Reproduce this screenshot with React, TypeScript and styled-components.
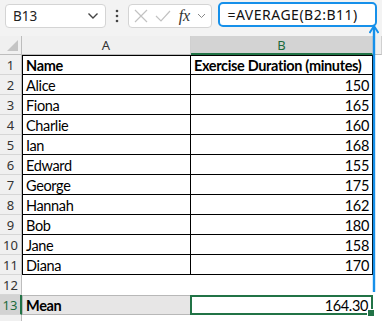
import React from "react";
import styled, { createGlobalStyle } from "styled-components";

const GlobalStyle = createGlobalStyle`
  html, body {
    margin: 0;
    padding: 0;
    background: #f3f3f3;
  }
`;

const Page = styled.div`
  position: relative;
  width: 382px;
  height: 321px;
  overflow: hidden;
  background: #f3f3f3;
`;

const Toolbar = styled.div`
  display: flex;
  align-items: center;
  height: 36px;
  padding: 0 5px;
  box-sizing: border-box;
`;

const NameBox = styled.div`
  display: flex;
  align-items: center;
  justify-content: space-between;
  width: 101px;
  height: 24px;
  margin-top: -4px;
  box-sizing: border-box;
  padding: 0 6px 0 7px;
  background: #fff;
  border: 1px solid #d4d4d4;
  border-radius: 4px;
  font-family: "Noto Sans", "Open Sans", sans-serif;
  font-size: 13.5px;
  color: #222;
`;

const Dots = styled.div`
  width: 22px;
  display: flex;
  justify-content: center;
  margin-top: -4px;
`;

const FuncBox = styled.div`
  display: flex;
  align-items: center;
  gap: 7px;
  width: 85px;
  height: 24px;
  margin-top: -4px;
  box-sizing: border-box;
  padding: 0 4px 0 5px;
  background: #fff;
  border: 1px solid #d4d4d4;
  border-radius: 4px;
`;

const Fx = styled.span`
  font-family: "Liberation Serif", serif;
  font-style: italic;
  font-size: 16px;
  color: #333;
  margin-left: 1px;
`;

const FormulaBox = styled.div`
  display: flex;
  align-items: center;
  margin-left: 6px;
  width: 159px;
  height: 25px;
  margin-top: -7px;
  box-sizing: border-box;
  padding-left: 7px;
  background: #fff;
  border: 2px solid #1690ea;
  border-radius: 5px;
  font-family: "Noto Sans", "Open Sans", sans-serif;
  font-size: 14px;
  letter-spacing: 0.5px;
  color: #111;
  white-space: pre;
`;

const Sheet = styled.div`
  display: grid;
  grid-template-columns: 22px 169px 182px 9px;
  grid-template-rows: 19px repeat(14, 20px);
  background: #fff;
`;

const Corner = styled.div`
  position: relative;
  background: #f0f0f0;
  border-right: 1px solid #bdbdbd;
  border-bottom: 1px solid #bdbdbd;
  box-sizing: border-box;
`;

const CornerTri = styled.div`
  position: absolute;
  right: 3px;
  bottom: 3px;
  width: 0;
  height: 0;
  border-left: 11px solid transparent;
  border-bottom: 11px solid #c4c4c4;
`;

const ColHead = styled.div<{ $active?: boolean }>`
  display: flex;
  align-items: center;
  justify-content: center;
  box-sizing: border-box;
  background: ${(p) => (p.$active ? "#d3d3d3" : "#f0f0f0")};
  border-right: 1px solid #d0d0d0;
  border-bottom: ${(p) => (p.$active ? "2px solid #217346" : "1px solid #bdbdbd")};
  padding-top: ${(p) => (p.$active ? "1px" : "0")};
  font-family: "Noto Sans", "Open Sans", sans-serif;
  font-size: 13px;
  color: ${(p) => (p.$active ? "#1d6b3c" : "#333")};
`;

const RowHead = styled.div<{ $active?: boolean }>`
  display: flex;
  align-items: center;
  justify-content: center;
  box-sizing: border-box;
  background: ${(p) => (p.$active ? "#d3d3d3" : "#f0f0f0")};
  border-right: ${(p) => (p.$active ? "2px solid #217346" : "1px solid #bdbdbd")};
  border-bottom: 1px solid #d6d6d6;
  font-family: "Noto Sans", "Open Sans", sans-serif;
  font-size: 13px;
  color: ${(p) => (p.$active ? "#1d6b3c" : "#333")};
`;

const Cell = styled.div<{ $num?: boolean; $bold?: boolean; $boxed?: boolean; $fill?: string }>`
  display: flex;
  align-items: center;
  justify-content: ${(p) => (p.$num ? "flex-end" : "flex-start")};
  box-sizing: border-box;
  padding: 1px 3px 0 3px;
  background: ${(p) => p.$fill || "#fff"};
  border-right: 1px solid ${(p) => (p.$boxed ? "#000" : "transparent")};
  border-bottom: 1px solid ${(p) => (p.$boxed ? "#000" : "transparent")};
  font-family: "Lato", "Liberation Sans", sans-serif;
  font-size: 14.5px;
  letter-spacing: -0.35px;
  font-weight: ${(p) => (p.$bold ? 700 : 400)};
  color: #000;
  white-space: nowrap;
`;

const LeftEdge = styled(Cell)`
  border-left: 1px solid #000;
`;

const TopRow = styled(Cell)`
  border-top: 1px solid #000;
`;

const MeanCell = styled(Cell)`
  border-top: 1px solid #b8b8b8;
  border-left: 1px solid #b8b8b8;
  border-bottom: 1px solid #b8b8b8;
`;

const SelCell = styled.div`
  position: relative;
  display: flex;
  align-items: center;
  justify-content: flex-end;
  box-sizing: border-box;
  padding: 1px 3px 0 3px;
  background: #fff;
  border: 2px solid #217346;
  margin-left: -1px;
  font-family: "Lato", "Liberation Sans", sans-serif;
  font-size: 14.5px;
  letter-spacing: -0.35px;
  color: #000;
`;

const Handle = styled.div`
  position: absolute;
  right: -4px;
  bottom: -4px;
  width: 6px;
  height: 6px;
  background: #217346;
  border: 1px solid #fff;
`;

const Spare = styled.div`
  background: #fff;
`;

const Arrow = styled.svg`
  position: absolute;
  left: 369px;
  top: 24px;
`;

const data: [string, number][] = [
  ["Alice", 150],
  ["Fiona", 165],
  ["Charlie", 160],
  ["Ian", 168],
  ["Edward", 155],
  ["George", 175],
  ["Hannah", 162],
  ["Bob", 180],
  ["Jane", 158],
  ["Diana", 170],
];

const App: React.FC = () => {
  return (
    <Page>
      <GlobalStyle />
      <Toolbar>
        <NameBox>
          <span>B13</span>
          <svg width="12" height="8" viewBox="0 0 12 8">
            <path d="M1.5 1.5 L6 6 L10.5 1.5" fill="none" stroke="#444" strokeWidth="1.4" />
          </svg>
        </NameBox>
        <Dots>
          <svg width="4" height="14" viewBox="0 0 4 14">
            <circle cx="2" cy="2" r="1.3" fill="#444" />
            <circle cx="2" cy="7" r="1.3" fill="#444" />
            <circle cx="2" cy="12" r="1.3" fill="#444" />
          </svg>
        </Dots>
        <FuncBox>
          <svg width="14" height="14" viewBox="0 0 14 14">
            <path d="M1 1 L13 13 M13 1 L1 13" stroke="#c2c2c2" strokeWidth="1.2" />
          </svg>
          <svg width="16" height="14" viewBox="0 0 16 14">
            <path d="M1 7 L6 12 L15 2" fill="none" stroke="#c2c2c2" strokeWidth="1.2" />
          </svg>
          <Fx>fx</Fx>
          <svg width="9" height="6" viewBox="0 0 9 6">
            <path d="M1 1 L4.5 4.5 L8 1" fill="none" stroke="#888" strokeWidth="1" />
          </svg>
        </FuncBox>
        <FormulaBox>=AVERAGE(B2:B11)</FormulaBox>
      </Toolbar>
      <Sheet>
        <Corner>
          <CornerTri />
        </Corner>
        <ColHead>A</ColHead>
        <ColHead $active>B</ColHead>
        <ColHead />

        <RowHead>1</RowHead>
        <TopRow $boxed $bold style={{ borderLeft: "1px solid #000" }}>Name</TopRow>
        <TopRow $boxed $bold>Exercise Duration (minutes)</TopRow>
        <Spare />

        {data.map(([name, mins], i) => (
          <React.Fragment key={name}>
            <RowHead>{i + 2}</RowHead>
            <LeftEdge $boxed>{name}</LeftEdge>
            <Cell $boxed $num>{mins}</Cell>
            <Spare />
          </React.Fragment>
        ))}

        <RowHead>12</RowHead>
        <Cell />
        <Cell />
        <Spare />

        <RowHead $active>13</RowHead>
        <MeanCell $bold $fill="#e7e6e6">Mean</MeanCell>
        <SelCell>
          164.30
          <Handle />
        </SelCell>
        <Spare />

        <RowHead />
        <Cell />
        <Cell />
        <Spare />
      </Sheet>
      <Arrow width="10" height="270" viewBox="0 0 10 270">
        <path d="M5 3 L5 268" stroke="#1690ea" strokeWidth="2.4" />
        <path d="M0.5 9 L5 2 L9.5 9" fill="none" stroke="#1690ea" strokeWidth="2" />
      </Arrow>
    </Page>
  );
};

export default App;
